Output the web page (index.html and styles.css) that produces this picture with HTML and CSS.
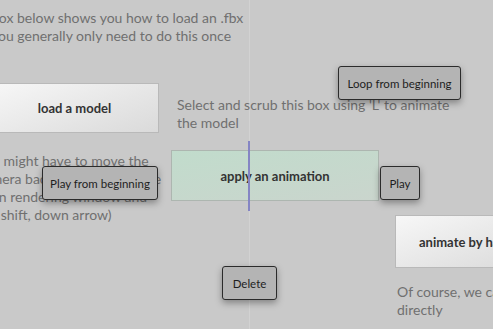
FILE: index.html
```html
<!DOCTYPE html>
<html lang="en">
<head>
  <meta charset="UTF-8" />
  <title>Sheet</title>
  <link rel="stylesheet" href="styles.css">
</head>
<body>
  <div class="canvas">
    <div class="guide"></div>

    <!-- notes -->
    <p class="note note-top">box below shows you how to load an .fbx<br>you generally only need to do this once</p>
    <p class="note note-left">You might have to move the<br>camera back a bit (click on the<br>main rendering window and<br>ctrl shift, down arrow)</p>
    <p class="note note-scrub">Select and scrub this box using 'L' to animate<br>the model</p>
    <p class="note note-course">Of course, we can also animate by hand<br>directly</p>

    <!-- boxes -->
    <div class="box box-load">load a model</div>
    <div class="box box-anim">apply an animation</div>
    <div class="box box-hand">animate by hand</div>
    <div class="scrub-line"></div>

    <!-- floating buttons -->
    <button class="btn btn-loop">Loop from beginning</button>
    <button class="btn btn-playfrom">Play from beginning</button>
    <button class="btn btn-play">Play</button>
    <button class="btn btn-delete">Delete</button>
  </div>
</body>
</html>
```

FILE: styles.css
```css
body {
  margin: 0;
  background-color: #c9c9c9;
  font-family: Lato, "Open Sans", sans-serif;
}

.canvas {
  position: relative;
  width: 493px;
  height: 329px;
  overflow: hidden;
}

.guide {
  position: absolute;
  left: 249px;
  top: 0;
  width: 1px;
  height: 329px;
  background-color: #d2d2d2;
}

.note {
  position: absolute;
  margin: 0;
  font-size: 14px;
  line-height: 18px;
  color: #707070;
  white-space: nowrap;
}

.note-top { left: -9px; top: 9px; }
.note-left { left: -23px; top: 152px; }
.note-scrub { left: 177px; top: 96px; }
.note-course { left: 397px; top: 283px; }

.box {
  position: absolute;
  display: flex;
  align-items: center;
  justify-content: center;
  box-sizing: border-box;
  font-size: 13px;
  font-weight: bold;
  color: #333;
  border: 1px solid #b9b9b9;
  background: linear-gradient(160deg, #f7f7f7, #dadada);
}

.box-load {
  left: -10px;
  top: 83px;
  width: 169px;
  height: 50px;
}

.box-anim {
  left: 171px;
  top: 150px;
  width: 208px;
  height: 51px;
  border-color: #adb6b0;
  background: linear-gradient(170deg, #c1dccc, #cad5cd);
}

.box-hand {
  left: 395px;
  top: 215px;
  width: 140px;
  height: 53px;
  justify-content: flex-start;
  padding-left: 23px;
}

.scrub-line {
  position: absolute;
  left: 248px;
  top: 141px;
  width: 2px;
  height: 70px;
  background-color: #8585c4;
}

.btn {
  position: absolute;
  box-sizing: border-box;
  height: 34px;
  padding: 0;
  font-family: Lato, "Open Sans", sans-serif;
  font-size: 11.5px;
  color: #1e1e1e;
  background-color: #b4b4b4;
  border: 1px solid #2b2b2b;
  border-radius: 3px;
  box-shadow: 0 3px 7px rgba(0, 0, 0, 0.35);
}

.btn-loop { left: 338px; top: 66px; width: 123px; }
.btn-playfrom { left: 42px; top: 166px; width: 116px; }
.btn-play { left: 380px; top: 166px; width: 40px; }
.btn-delete { left: 222px; top: 266px; width: 55px; }
```
